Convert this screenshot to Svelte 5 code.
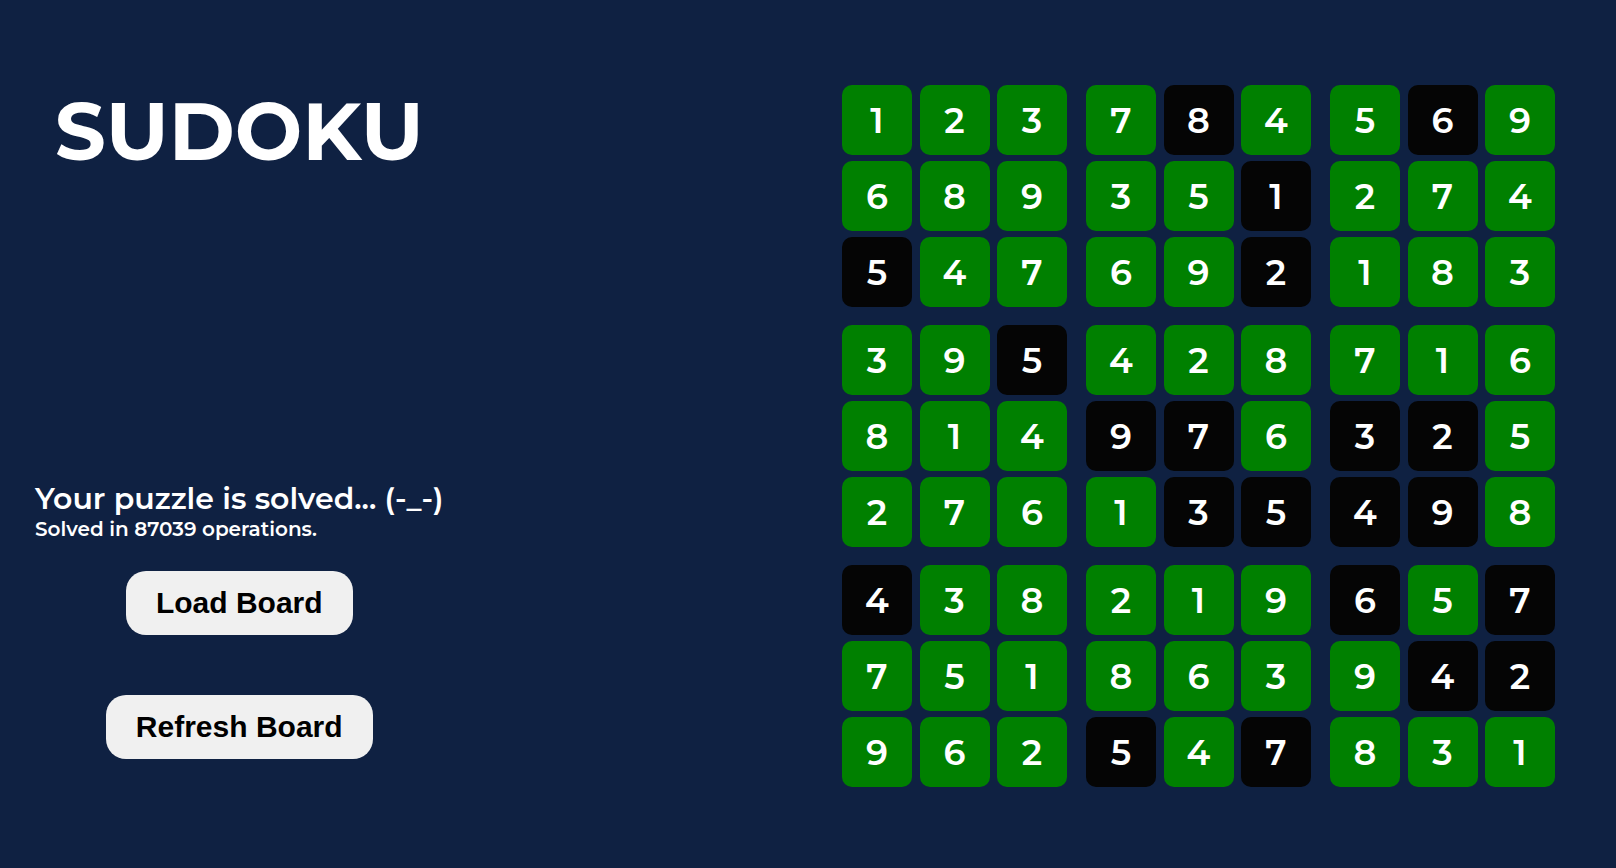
<script>
  // Solved board: each row's digits, and "#" marks the digits given at the start.
  const digits = [
    '123784569',
    '689351274',
    '547692183',
    '395428716',
    '814976325',
    '276135498',
    '438219657',
    '751863942',
    '962547831',
  ];
  const given = [
    '....#..#.',
    '.....#...',
    '#....#...',
    '..#......',
    '...##.##.',
    '....####.',
    '#.....#.#',
    '.......##',
    '...#.#...',
  ];
  const operations = 87039;
  const three = [0, 1, 2];

  const boxes = three.flatMap((br) =>
    three.map((bc) =>
      three.flatMap((r) =>
        three.map((c) => {
          const row = br * 3 + r;
          const col = bc * 3 + c;
          return { value: digits[row][col], given: given[row][col] === '#' };
        })
      )
    )
  );
</script>

<main class="page">
  <section class="panel">
    <h1>SUDOKU</h1>
    <div class="controls">
      <div class="status">
        <p class="message">Your puzzle is solved... (-_-)</p>
        <p class="detail">Solved in {operations} operations.</p>
      </div>
      <button type="button">Load Board</button>
      <button type="button">Refresh Board</button>
    </div>
  </section>

  <section class="board">
    {#each boxes as box}
      <div class="box">
        {#each box as cell}
          <div class="cell" class:given={cell.given}>{cell.value}</div>
        {/each}
      </div>
    {/each}
  </section>
</main>

<style>
  :global(body) {
    margin: 0;
    background: #0f2142;
  }

  .page {
    box-sizing: border-box;
    min-height: 100vh;
    padding: 85px 61px 81px 35px;
    display: flex;
    justify-content: space-between;
    align-items: stretch;
    gap: 40px;
    color: #fff;
    font-family: Montserrat, Inter, sans-serif;
  }

  .panel {
    display: flex;
    flex-direction: column;
    align-items: center;
    justify-content: space-between;
    padding-bottom: 28px;
  }

  h1 {
    margin: 0;
    font-size: 80px;
    line-height: 94px;
    font-weight: 700;
  }

  .controls {
    display: flex;
    flex-direction: column;
    align-items: center;
  }

  .status {
    align-self: stretch;
    margin-bottom: 30px;
    font-weight: 600;
  }

  .message,
  .detail {
    margin: 0;
  }

  .message {
    font-size: 30px;
    line-height: 36px;
  }

  .detail {
    font-size: 20px;
    line-height: 24px;
  }

  button {
    height: 64px;
    padding: 0 30px;
    border: 0;
    border-radius: 20px;
    background: #f0f0f0;
    color: #000;
    font: 700 30px 'Liberation Sans', Arial, sans-serif;
    cursor: pointer;
  }

  button + button {
    margin-top: 60px;
  }

  .board {
    display: grid;
    grid-template-columns: repeat(3, 225px);
    gap: 18px 19px;
    align-content: start;
  }

  .box {
    display: grid;
    grid-template-columns: repeat(3, 70px);
    grid-auto-rows: 70px;
    row-gap: 6px;
    justify-content: space-between;
  }

  .cell {
    display: flex;
    align-items: center;
    justify-content: center;
    border-radius: 10px;
    background: #008000;
    font-size: 35px;
    font-weight: 600;
  }

  .cell.given {
    background: #050505;
  }
</style>
